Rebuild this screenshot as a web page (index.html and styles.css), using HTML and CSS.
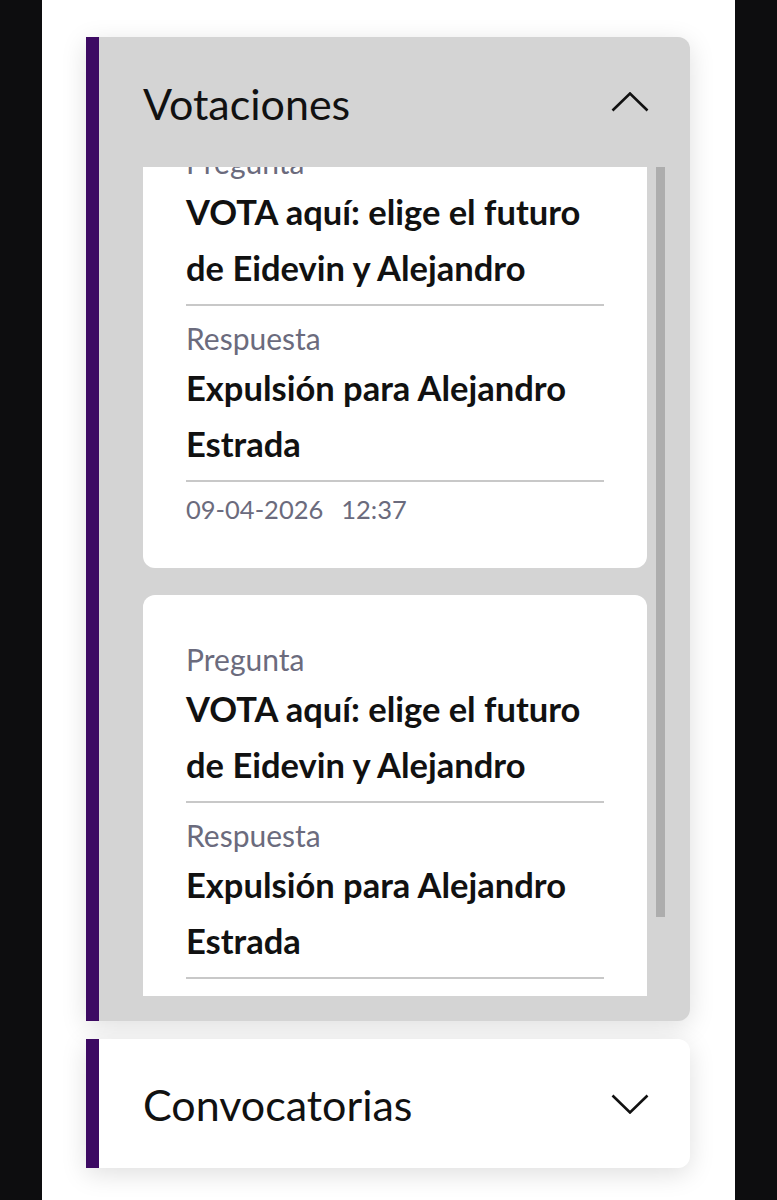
FILE: index.html
```html
<!DOCTYPE html>
<html lang="es">
<head>
  <meta charset="UTF-8">
  <meta name="viewport" content="width=device-width, initial-scale=1.0">
  <title>Votaciones</title>
  <link rel="stylesheet" href="styles.css">
</head>
<body>

  <div class="screen">

    <section class="panel panel-open">
      <div class="panel-header">
        <h2>Votaciones</h2>
        <svg class="chevron" width="38" height="20" viewBox="0 0 38 20">
          <polyline points="1.5,18.5 19,1.5 36.5,18.5" fill="none" stroke="#111" stroke-width="2.6"/>
        </svg>
      </div>

      <div class="vote-list">
        <div class="vote-track">
          <div class="vote-card first">
            <div class="label">Pregunta</div>
            <div class="value">VOTA aquí: elige el futuro de Eidevin y Alejandro</div>
            <div class="label">Respuesta</div>
            <div class="value">Expulsión para Alejandro Estrada</div>
            <div class="date"><span>09-04-2026</span><span>12:37</span></div>
          </div>

          <div class="vote-card">
            <div class="label">Pregunta</div>
            <div class="value">VOTA aquí: elige el futuro de Eidevin y Alejandro</div>
            <div class="label">Respuesta</div>
            <div class="value">Expulsión para Alejandro Estrada</div>
            <div class="date"><span>09-04-2026</span><span>12:37</span></div>
          </div>
        </div>
        <div class="scroll-thumb"></div>
      </div>
    </section>

    <section class="panel">
      <div class="panel-header closed">
        <h2>Convocatorias</h2>
        <svg class="chevron" width="38" height="20" viewBox="0 0 38 20">
          <polyline points="1.5,1.5 19,18.5 36.5,1.5" fill="none" stroke="#111" stroke-width="2.6"/>
        </svg>
      </div>
    </section>

  </div>

</body>
</html>
```

FILE: styles.css
```css
body {
  margin: 0;
  padding: 0;
  background-color: #0d0d0f;
  font-family: Lato, "Liberation Sans", sans-serif;
  color: #111;
}

.screen {
  margin: 0 42px;
  height: 1200px;
  background-color: #fff;
  padding: 37px 45px 0 44px;
  box-sizing: border-box;
  display: flex;
  flex-direction: column;
  gap: 18px;
  overflow: hidden;
}

.panel {
  background-color: #fff;
  border-left: 13px solid #3d0a63;
  border-radius: 0 12px 12px 0;
  box-shadow: 0 6px 26px rgba(0, 0, 0, 0.13);
}

.panel-open {
  background-color: #d4d4d4;
  padding: 0 25px 25px 0;
}

.panel-header {
  height: 130px;
  padding-left: 44px;
  display: flex;
  align-items: center;
  justify-content: space-between;
  box-sizing: border-box;
}

.panel-header.closed {
  height: 129px;
  padding-right: 41px;
}

.panel-open .panel-header {
  padding-right: 16px;
}

.panel-header h2 {
  margin: 0;
  font-size: 43px;
  font-weight: 400;
  padding-top: 2px;
}

.chevron {
  display: block;
}

.vote-list {
  height: 829px;
  margin-left: 44px;
  overflow: hidden;
  display: flex;
  gap: 9px;
}

.vote-track {
  flex: 1;
  display: flex;
  flex-direction: column;
  gap: 27px;
}

.scroll-thumb {
  width: 9px;
  height: 750px;
  flex-shrink: 0;
  background-color: #adadad;
}

.vote-card {
  background-color: #fff;
  border-radius: 12px;
  padding: 42px 43px 0;
  height: 470px;
  box-sizing: border-box;
  flex-shrink: 0;
}

.vote-card.first {
  margin-top: -69px;
}

.label {
  font-size: 30px;
  color: #6b6b7d;
  line-height: 44px;
}

.value {
  font-size: 34.5px;
  font-weight: 700;
  line-height: 56px;
  padding-bottom: 8px;
  border-bottom: 2px solid #c8c8c8;
  margin-bottom: 10px;
}

.date {
  font-size: 25.5px;
  line-height: 34px;
  color: #6b6b7d;
  display: flex;
  gap: 18px;
}
```
